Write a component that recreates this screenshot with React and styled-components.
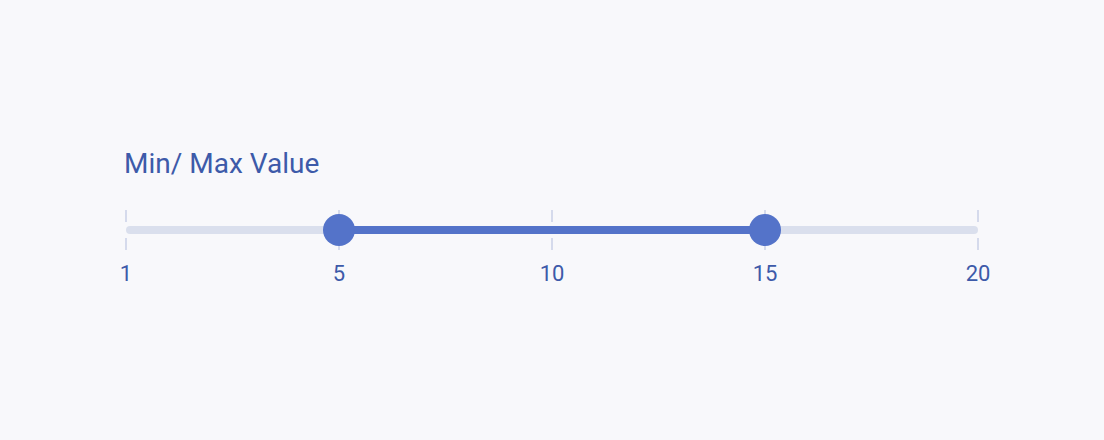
import React from 'react';
import styled, { createGlobalStyle } from 'styled-components';

const marks = [1, 5, 10, 15, 20];
// selected range, as indexes into marks
const range = [1, 3];

function RangeSlider({ label }) {
  const pct = (i) => (i / (marks.length - 1)) * 100;
  const from = pct(range[0]);
  const to = pct(range[1]);
  return (
    <Panel>
      <Title>{label}</Title>
      <Slider>
        <Ticks>
          {marks.map((m) => (
            <Tick key={m} />
          ))}
        </Ticks>
        <Track />
        <Fill style={{ left: `${from}%`, width: `${to - from}%` }} />
        <Thumb style={{ left: `${from}%` }} />
        <Thumb style={{ left: `${to}%` }} />
      </Slider>
      <Labels>
        {marks.map((m) => (
          <Mark key={m}>
            <span>{m}</span>
          </Mark>
        ))}
      </Labels>
    </Panel>
  );
}

export default function App() {
  return (
    <>
      <GlobalStyle />
      <Page>
        <RangeSlider label='Min/ Max Value' />
      </Page>
    </>
  );
}

const GlobalStyle = createGlobalStyle`
  body {
    margin: 0;
    background: #f8f8fb;
    font-family: Roboto, 'Liberation Sans', sans-serif;
  }
`;
const Page = styled.div`
  width: 1104px;
  height: 440px;
  padding: 148px 0 0 124px;
  box-sizing: border-box;
`;
const Panel = styled.div`
  width: 856px;
  display: flex;
  flex-direction: column;
`;
const Title = styled.div`
  font-size: 28px;
  line-height: 32px;
  color: #3d5aa9;
  margin-bottom: 30px;
`;
const Slider = styled.div`
  position: relative;
  height: 40px;
  margin-left: 2px;
  width: 852px;
  display: flex;
  align-items: center;
`;
const Ticks = styled.div`
  position: absolute;
  inset: 0;
  display: flex;
  justify-content: space-between;
`;
// tick is split around the track: a stub above and one below
const Tick = styled.div`
  width: 0;
  position: relative;
  &::before,
  &::after {
    content: '';
    position: absolute;
    left: -1px;
    width: 2px;
    height: 12px;
    background: #d5daec;
  }
  &::before {
    top: 0;
  }
  &::after {
    bottom: 0;
  }
`;
const Track = styled.div`
  position: relative;
  width: 100%;
  height: 8px;
  border-radius: 4px;
  background: #dadfed;
`;
const Fill = styled.div`
  position: absolute;
  top: 16px;
  height: 8px;
  background: #5473c9;
`;
const Thumb = styled.div`
  position: absolute;
  top: 4px;
  width: 32px;
  height: 32px;
  margin-left: -16px;
  border-radius: 50%;
  background: #5473c9;
`;
const Labels = styled.div`
  margin: 11px 0 0 2px;
  width: 852px;
  display: flex;
  justify-content: space-between;
`;
const Mark = styled.div`
  width: 0;
  display: flex;
  justify-content: center;
  font-size: 22px;
  line-height: 26px;
  color: #3d5aa9;
  white-space: nowrap;
`;
